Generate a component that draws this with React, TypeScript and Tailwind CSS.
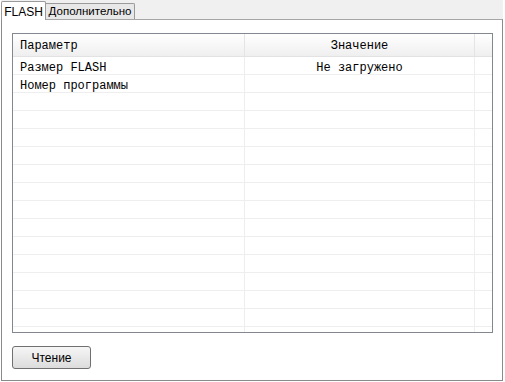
import React from "react"

const rows: [string, string][] = [
  ["Размер FLASH", "Не загружено"],
  ["Номер программы", ""],
  ...Array.from({ length: 14 }, () => ["", ""] as [string, string]),
]

const mono = { fontFamily: '"Liberation Mono", "DejaVu Sans Mono", monospace' }

export default function App() {
  return (
    <div
      className="w-[505px] h-[382px] bg-white flex flex-col pl-px pr-[2px] pb-[1px] text-[11px] text-black"
      style={{ fontFamily: '"Liberation Sans", Arial, sans-serif' }}
    >
      {/* tab strip */}
      <div className="h-[19px] flex items-end bg-[#f0f0f0] relative">
        <div className="relative z-10 h-[19px] w-[45px] bg-white border border-b-0 border-[#9a9a9a] rounded-t-[2px] flex items-center justify-center mb-[-1px] pt-[1px] text-[12px]">
          FLASH
        </div>
        <div className="h-[16px] w-[89px] bg-[#e8e8e8] border border-l-0 border-b-0 border-[#9a9a9a] rounded-tr-[2px] flex items-center justify-center pt-[1px] text-[11.5px]">
          Дополнительно
        </div>
      </div>

      {/* panel */}
      <div className="flex-1 flex flex-col border border-[#8a8a8a] border-t-[#a6a6a6] bg-white pl-[10px] pr-[9px] pt-[13px] pb-[10px]">
        <div className="h-[300px] border border-[#828790] bg-white overflow-hidden flex flex-col" style={mono}>
          <div className="h-[23px] shrink-0 grid grid-cols-[232px_230px_1fr] bg-gradient-to-b from-white to-[#efefef] border-b border-[#e2e2e2] text-[12px]">
            <div className="border-r border-[#e4e4e4] flex items-center pl-[7px] pt-[2px]">Параметр</div>
            <div className="border-r border-[#e4e4e4] flex items-center justify-center pt-[2px]">Значение</div>
            <div />
          </div>
          {rows.map((r, i) => (
            <div
              key={i}
              className="h-[18px] shrink-0 grid grid-cols-[232px_230px_1fr] border-b border-[#eeeeee] text-[12px]"
            >
              <div className="border-r border-[#eeeeee] flex items-center pl-[7px] pt-[2px] whitespace-nowrap">{r[0]}</div>
              <div className="border-r border-[#eeeeee] flex items-center justify-center pt-[2px] whitespace-nowrap">{r[1]}</div>
              <div />
            </div>
          ))}
        </div>
        <div className="mt-[13px]">
          <button className="w-[79px] h-[23px] border border-[#707070] rounded-[3px] bg-gradient-to-b from-[#f6f6f6] to-[#dcdcdc] text-[12px] flex items-center justify-center">
            Чтение
          </button>
        </div>
      </div>
    </div>
  )
}
